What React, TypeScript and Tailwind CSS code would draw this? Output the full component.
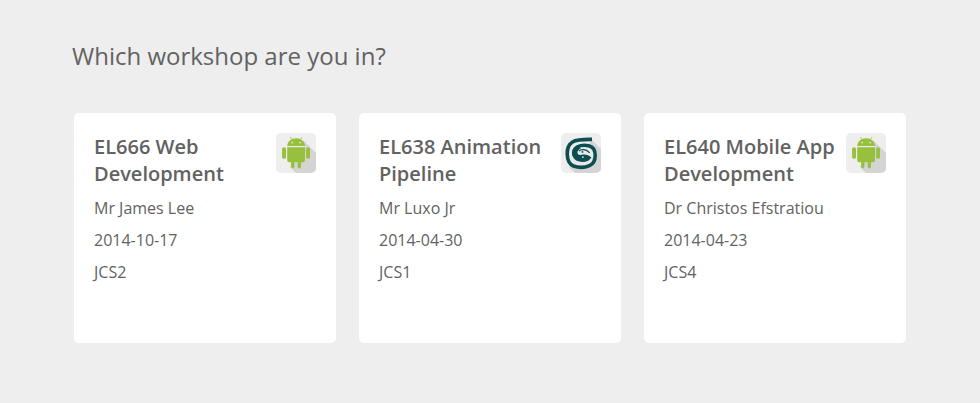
function AndroidIcon() {
  return (
    <svg viewBox="0 0 40 40" className="size-10 shrink-0 rounded-[5px] bg-[#eeeeee]" role="img" aria-label="Android">
      <path d="M27 7 40 20V40H20L14 34Z" fill="#d4d4d4" />
      <path d="M11 14.4h18v-1.6H11z" fill="#ededed" />
      <g fill="#97c03d">
        <path d="M11.2 13C11.5 8.400 15.200 5.300 20.100 5.300S28.700 8.400 29 13Z" />
        <path d="M11.200 14.300H29V27.200a2 2 0 0 1-2 2H25v4.600a1.650 1.650 0 0 1-3.300 0v-4.600h-3.300v4.600a1.650 1.650 0 0 1-3.300 0v-4.600h-1.900a2 2 0 0 1-2-2Z" />
        <rect x="6.100" y="14.200" width="3.900" height="11.600" rx="1.900" />
        <rect x="30.100" y="14.200" width="3.900" height="11.600" rx="1.900" />
        <path d="m14.300 4 1.700 3M25.900 4l-1.700 3" stroke="#97c03d" strokeWidth=".7" />
      </g>
      <circle cx="16.100" cy="9.600" r=".8" fill="#f1f1f1" />
      <circle cx="24.100" cy="9.600" r=".8" fill="#f1f1f1" />
    </svg>
  );
}

function SpiralIcon() {
  return (
    <svg viewBox="0 0 40 40" className="size-10 shrink-0 rounded-[5px] bg-[#eeeeee]" role="img" aria-label="3ds Max">
      <path d="M31 7 40 16V40H14L8 34Z" fill="#d4d4d4" />
      <path d="M14 13H28L33 18V27L28 33H12L8 28V17Z" fill="#e9e9e9" />
      <path
        d="M31 6.400C22 6.300 15.500 6.600 11.500 9C7.200 11.600 6.100 16 6.200 21C6.400 27.500 8 31.200 12.500 33C17 34.600 24 34.500 28.500 32.600C32.800 30.700 34.200 27 34.200 22.500C34.200 17 32.500 14 28.500 12.900C24.500 12.100 19.500 12.200 16.500 13.800C13 15.700 12.300 19 13.300 22.500"
        fill="none"
        stroke="#0d4f50"
        strokeWidth="3.600"
      />
      <path
        d="M11.300 19C11.600 17 14 14.500 17 14.300L20 15.200C17.400 16.400 16.200 18.300 16.500 20.200C17 22 18.600 22.100 20.500 21.700C24.500 20.800 28 22.200 30.400 24.400C28.500 27.500 25.500 28.900 21.500 28.900C15.500 28.900 11.500 25.800 11.300 21Z"
        fill="#0d4f50"
      />
      <path d="M18 18C20.300 15.700 25.500 16 28.600 19.800" fill="none" stroke="#0d4f50" strokeWidth="1.200" />
      <circle cx="21.500" cy="18.900" r=".9" fill="#0d4f50" />
      <circle cx="21.800" cy="24.100" r=".9" fill="#ededed" />
    </svg>
  );
}

const workshops = [
  { title: "EL666 Web Development", tutor: "Mr James Lee", date: "2014-10-17", room: "JCS2", Icon: AndroidIcon },
  { title: "EL638 Animation Pipeline", tutor: "Mr Luxo Jr", date: "2014-04-30", room: "JCS1", Icon: SpiralIcon },
  { title: "EL640 Mobile App Development", tutor: "Dr Christos Efstratiou", date: "2014-04-23", room: "JCS4", Icon: AndroidIcon },
];

export default function App() {
  return (
    <main className="min-h-screen bg-[#eeeeee] px-[72px] pt-10 pb-[60px] font-['Open_Sans',sans-serif] text-[#626262]">
      <h1 className="text-2xl leading-8">Which workshop are you in?</h1>
      <div className="mt-[41px] grid grid-cols-3 gap-[23px] px-0.5">
        {workshops.map(({ title, tutor, date, room, Icon }) => (
          <article key={title} className="min-h-[230px] rounded-[5px] bg-white p-5">
            <div className="flex items-start justify-between">
              <h2 className="text-xl leading-[27px] font-semibold">{title}</h2>
              <Icon />
            </div>
            <div className="mt-[5px] text-base leading-8">
              <p>{tutor}</p>
              <p>{date}</p>
              <p>{room}</p>
            </div>
          </article>
        ))}
      </div>
    </main>
  );
}
